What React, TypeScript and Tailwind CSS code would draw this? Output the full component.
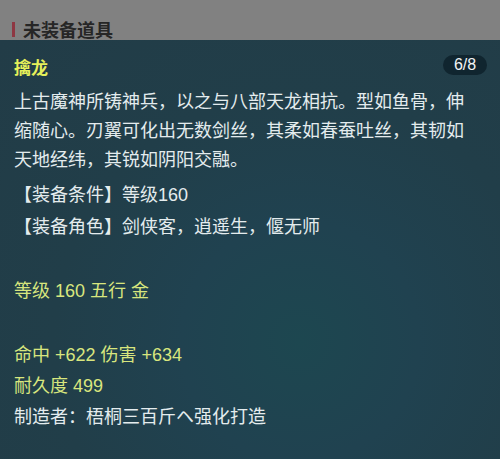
import React from "react";

export default function App() {
  const font = "font-['Liberation_Sans','Noto_Sans_CJK_SC',sans-serif]";
  return (
    <div className={`w-[500px] h-[459px] overflow-hidden flex flex-col ${font}`}>
      <div className="h-[40px] bg-[#818181] flex items-end pl-[12px] pb-[1px]">
        <div className="flex items-center gap-[8px] h-[20px]">
          <div className="w-[3px] h-[15px] bg-[#8e3742]" />
          <span className="text-[18px] leading-[20px] font-semibold text-[#262626] font-['Noto_Sans_CJK_SC',sans-serif]">未装备道具</span>
        </div>
      </div>
      <div className="flex-1 bg-[#213e49] bg-[radial-gradient(ellipse_at_60%_72%,#1d4750_0%,#204250_28%,#213e49_58%,#223c47_100%)] pl-[14px] pr-[13px] pt-[15px]">
        <div className="flex justify-between items-start">
          <span className="text-[17px] leading-[28px] font-bold text-[#e6f05a]">擒龙</span>
          <span className="h-[20px] w-[44px] rounded-full bg-[#10252f] text-[#f2f4f5] text-[16px] leading-[20px] text-center">6/8</span>
        </div>
        <div className="w-[458px] mt-[5px] text-[18px] leading-[29px] text-[#e4ecee]">
          上古魔神所铸神兵，以之与八部天龙相抗。型如鱼骨，伸缩随心。刃翼可化出无数剑丝，其柔如春蚕吐丝，其韧如天地经纬，其锐如阴阳交融。
        </div>
        <div className="mt-[4px] text-[18px] leading-[32px] text-[#e4ecee]">
          <div>【装备条件】等级160</div>
          <div>【装备角色】剑侠客，逍遥生，偃无师</div>
          <div className="h-[32px]" />
          <div className="text-[#d8e67e]">等级 160 五行 金</div>
          <div className="h-[33px]" />
        </div>
        <div className="text-[18px] leading-[31px] text-[#e4ecee]">
          <div className="text-[#d8e67e]">命中 +622 伤害 +634</div>
          <div className="text-[#d8e67e]">耐久度 499</div>
          <div>制造者：梧桐三百斤ヘ强化打造</div>
        </div>
      </div>
    </div>
  );
}
